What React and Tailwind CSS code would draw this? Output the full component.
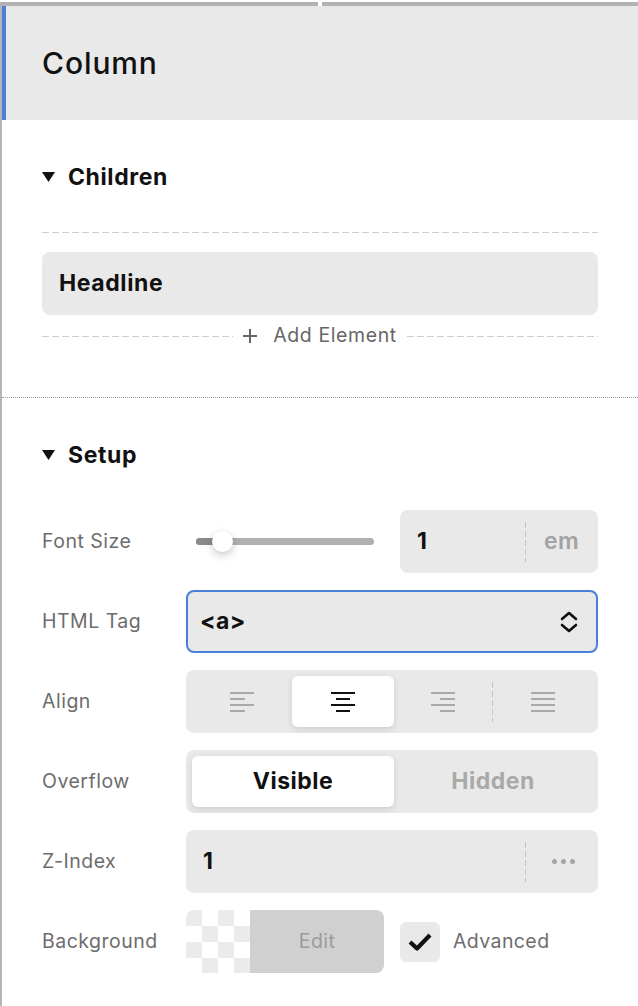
import React from "react";

const Caret = () => (
  <svg width="13" height="10" viewBox="0 0 13 10" className="shrink-0">
    <path d="M0 0 H13 L6.5 10 Z" fill="#111" />
  </svg>
);

const dashH =
  "h-px bg-[repeating-linear-gradient(90deg,#cdcdcd_0_7px,transparent_7px_10px)]";

const AlignIcon = ({ kind, color }) => {
  // four 2px bars, 6px apart
  const rows = [0, 6, 12, 18];
  const widths =
    kind === "justify" ? [24, 24, 24, 24] : kind === "center" ? [24, 14, 24, 14] : [24, 15, 24, 15];
  return (
    <svg width="24" height="20" viewBox="0 0 24 20">
      {rows.map((y, i) => {
        const w = widths[i];
        const x = kind === "left" ? 0 : kind === "right" ? 24 - w : (24 - w) / 2;
        return <rect key={i} x={x} y={y} width={w} height="2" fill={color} />;
      })}
    </svg>
  );
};

const Row = ({ label, children }) => (
  <div className="flex h-[63px] items-center">
    <div className="w-[144px] shrink-0 text-[19.5px] tracking-[0.5px] text-[#6d6d6d]">{label}</div>
    <div className="flex flex-1 items-center">{children}</div>
  </div>
);

const VDivider = () => (
  <div className="h-[40px] w-px bg-[repeating-linear-gradient(180deg,#c4c4c4_0_6px,transparent_6px_9px)]" />
);

const SectionTitle = ({ children }) => (
  <div className="flex h-[22px] items-center gap-[13px]">
    <Caret />
    <span className="text-[23px] font-bold tracking-[0.6px] text-[#111]">{children}</span>
  </div>
);

export default function App() {
  return (
    <div
      className="relative h-[1006px] w-[638px] overflow-hidden bg-white"
      style={{ fontFamily: "Inter, 'Noto Sans', sans-serif" }}
    >
      {/* tab strip */}
      <div className="flex h-[6px] gap-[4px] pt-[2px]">
        <div className="w-[318px] bg-[#b2b2b2]" />
        <div className="flex-1 bg-[#b2b2b2]" />
      </div>

      <div className="h-[1000px] border-l-2 border-[#b5b5b5]">
        {/* header */}
        <div className="flex h-[114px] items-center border-l-4 border-[#4a7fd8] bg-[#e9e9e9] pl-[36px]">
          <h1 className="text-[30px] font-medium tracking-[0.9px] text-[#111]">Column</h1>
        </div>

        {/* children */}
        <div className="px-[40px] pb-[49px] pt-[46px]">
          <SectionTitle>Children</SectionTitle>
          <div className={`mt-[44px] ${dashH}`} />
          <div className="mt-[19px] flex h-[63px] items-center rounded-lg bg-[#e9e9e9] pl-[17px]">
            <span className="text-[23px] font-bold tracking-[0.6px] text-[#111]">Headline</span>
          </div>
          <div className="mt-[9px] flex h-[24px] items-center">
            <div className={`flex-1 ${dashH}`} />
            <div className="flex items-center gap-[16px] px-[10px] text-[19.5px] tracking-[0.6px] text-[#666]">
              <svg width="14" height="14" viewBox="0 0 14 14">
                <path d="M7 0 V14 M0 7 H14" stroke="#666" strokeWidth="2" />
              </svg>
              <span>Add Element</span>
            </div>
            <div className={`flex-1 ${dashH}`} />
          </div>
        </div>

        <div className="border-t border-dotted border-[#9c9c9c]" />

        {/* setup */}
        <div className="px-[40px] pt-[46px]">
          <SectionTitle>Setup</SectionTitle>
          <div className="mt-[44px] flex flex-col gap-[17px]">
            <Row label="Font Size">
              <div className="relative flex w-[198px] items-center px-[10px]">
                <div className="relative h-[7px] flex-1 rounded-sm bg-[#b0b0b0]">
                  <div className="absolute left-0 top-0 h-full w-[26px] rounded-l-sm bg-[#8b8b8b]" />
                  <div className="absolute left-[16px] top-[-7px] h-[21px] w-[21px] rounded-full bg-white shadow-[0_3px_8px_rgba(0,0,0,0.22)]" />
                </div>
              </div>
              <div className="ml-[16px] flex h-[63px] w-[198px] items-center rounded-lg bg-[#e9e9e9] pl-[17px]">
                <span className="w-[108px] text-[23px] font-bold text-[#111]">1</span>
                <VDivider />
                <span className="ml-[18px] text-[23px] font-semibold tracking-[0.4px] text-[#a3a3a3]">em</span>
              </div>
            </Row>

            <Row label="HTML Tag">
              <div className="flex h-[63px] flex-1 items-center justify-between rounded-lg border-2 border-[#4a7fd8] bg-[#e9e9e9] pl-[12px] pr-[18px]">
                <span className="text-[23px] font-bold tracking-[0.4px] text-[#111]">&lt;a&gt;</span>
                <svg width="18" height="22" viewBox="0 0 18 22">
                  <path d="M2 8 L9 2 L16 8 M2 14 L9 20 L16 14" fill="none" stroke="#111" strokeWidth="2.6" strokeLinecap="round" strokeLinejoin="round" />
                </svg>
              </div>
            </Row>

            <Row label="Align">
              <div className="flex h-[63px] flex-1 items-center rounded-lg bg-[#e9e9e9] p-[6px]">
                <div className="flex h-full w-[100px] items-center justify-center">
                  <AlignIcon kind="left" color="#a9a9a9" />
                </div>
                <div className="flex h-full w-[102px] items-center justify-center rounded-md bg-white shadow-[0_2px_6px_rgba(0,0,0,0.12)]">
                  <AlignIcon kind="center" color="#111" />
                </div>
                <div className="flex h-full w-[98px] items-center justify-center">
                  <AlignIcon kind="right" color="#a9a9a9" />
                </div>
                <VDivider />
                <div className="flex h-full flex-1 items-center justify-center">
                  <AlignIcon kind="justify" color="#a9a9a9" />
                </div>
              </div>
            </Row>

            <Row label="Overflow">
              <div className="flex h-[63px] flex-1 items-center rounded-lg bg-[#e9e9e9] p-[6px]">
                <div className="flex h-full w-[202px] items-center justify-center rounded-md bg-white shadow-[0_2px_6px_rgba(0,0,0,0.12)]">
                  <span className="text-[23px] font-bold tracking-[0.5px] text-[#111]">Visible</span>
                </div>
                <div className="flex h-full flex-1 items-center justify-center">
                  <span className="text-[23px] font-bold tracking-[0.5px] text-[#a9a9a9]">Hidden</span>
                </div>
              </div>
            </Row>

            <Row label="Z-Index">
              <div className="flex h-[63px] flex-1 items-center rounded-lg bg-[#e9e9e9] pl-[17px]">
                <span className="w-[322px] text-[23px] font-bold text-[#111]">1</span>
                <VDivider />
                <div className="ml-[26px] flex gap-[4px]">
                  <span className="h-[5px] w-[5px] rounded-full bg-[#a3a3a3]" />
                  <span className="h-[5px] w-[5px] rounded-full bg-[#a3a3a3]" />
                  <span className="h-[5px] w-[5px] rounded-full bg-[#a3a3a3]" />
                </div>
              </div>
            </Row>

            <Row label="Background">
              <div className="flex h-[63px] w-[198px] overflow-hidden rounded-lg">
                <div className="w-[64px] bg-[repeating-conic-gradient(#ffffff_0_25%,#ebebeb_0_50%)] bg-[length:32px_32px]" />
                <div className="flex flex-1 items-center justify-center bg-[#d0d0d0]">
                  <span className="text-[19.5px] tracking-[0.4px] text-[#9b9b9b]">Edit</span>
                </div>
              </div>
              <div className="ml-[16px] flex h-[40px] w-[40px] items-center justify-center rounded-md bg-[#e9e9e9]">
                <svg width="24" height="20" viewBox="0 0 24 20">
                  <path d="M2 10 L9 16.5 L22 3" fill="none" stroke="#111" strokeWidth="4.2" strokeLinejoin="round" />
                </svg>
              </div>
              <span className="ml-[13px] text-[19.5px] tracking-[0.4px] text-[#6d6d6d]">Advanced</span>
            </Row>
          </div>
        </div>
      </div>
    </div>
  );
}
